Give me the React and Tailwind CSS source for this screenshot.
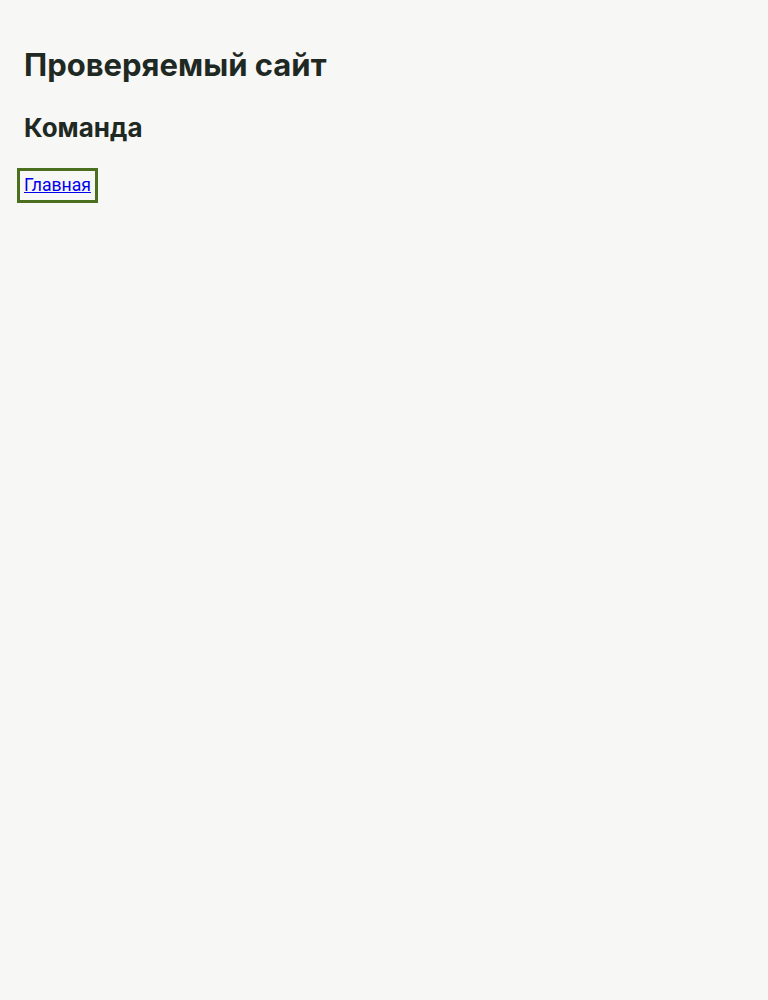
export default function App() {
  return (
    <div className="min-h-[1000px] bg-[#f7f7f5] px-6 pt-[42px] text-[#1f2923]" style={{ fontFamily: "Inter, sans-serif" }}>
      <h1 className="text-[31px] font-bold leading-[46px]">Проверяемый сайт</h1>
      <h2 className="mt-[22px] text-[26px] font-bold leading-[36px]">Команда</h2>
      <div className="mt-[29px] flex">
        <a href="#" className="inline-block text-[17.6px] leading-[21px] text-[#0000ee] underline outline-[3px] outline-solid outline-[#4b6e1f] outline-offset-[4px]" style={{ fontFamily: "Roboto, sans-serif" }}>Главная</a>
      </div>
    </div>
  );
}
